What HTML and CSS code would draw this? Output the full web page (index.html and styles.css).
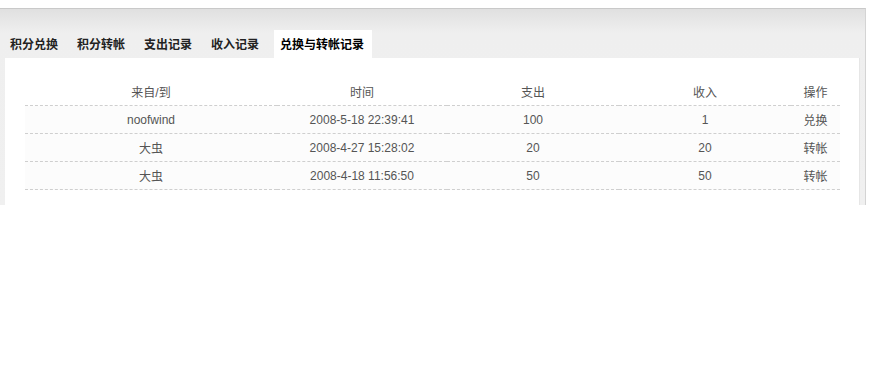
FILE: index.html
```html
<!DOCTYPE html>
<html>
<head>
    <meta charset="utf-8">
    <title>兑换与转帐记录</title>
    <link rel="stylesheet" href="styles.css">
</head>
<body>
    <div class="wrap">
        <ul class="tabs">
            <li>积分兑换</li>
            <li>积分转帐</li>
            <li>支出记录</li>
            <li>收入记录</li>
            <li class="current">兑换与转帐记录</li>
        </ul>

        <div class="panel">
            <table class="records">
                <colgroup>
                    <col class="c-from">
                    <col class="c-time">
                    <col class="c-out">
                    <col class="c-in">
                    <col class="c-op">
                </colgroup>
                <thead>
                    <tr>
                        <th>来自/到</th>
                        <th>时间</th>
                        <th>支出</th>
                        <th>收入</th>
                        <th>操作</th>
                    </tr>
                </thead>
                <tbody>
                    <tr>
                        <td>noofwind</td>
                        <td>2008-5-18 22:39:41</td>
                        <td>100</td>
                        <td>1</td>
                        <td>兑换</td>
                    </tr>
                    <tr>
                        <td>大虫</td>
                        <td>2008-4-27 15:28:02</td>
                        <td>20</td>
                        <td>20</td>
                        <td>转帐</td>
                    </tr>
                    <tr>
                        <td>大虫</td>
                        <td>2008-4-18 11:56:50</td>
                        <td>50</td>
                        <td>50</td>
                        <td>转帐</td>
                    </tr>
                </tbody>
            </table>
        </div>
    </div>
</body>
</html>
```

FILE: styles.css
```css
body { margin: 0; padding-top: 8px; background: #fff; font-family: "Liberation Sans", "Noto Sans CJK SC", sans-serif; font-size: 12px; color: #666; }

.wrap {
    width: 865px;
    height: 196px;
    border-top: 1px solid #c9c9c9;
    border-right: 1px solid #d4d4d4;
    background: linear-gradient(to bottom, #e0e0e0 0px, #efefef 24px, #f0f0f0 100%);
    overflow: hidden;
}

.tabs {
    list-style: none;
    margin: 0;
    padding: 21px 0 0 3px;
    display: flex;
    height: 28px;
}
.tabs li {
    padding: 0 7px;
    margin-right: 5px;
    height: 28px;
    line-height: 28px;
    font-family: "Noto Sans CJK SC", sans-serif;
    font-weight: bold;
    font-size: 12px;
    color: #222;
}
.tabs li.current {
    background: #fff;
    color: #000;
    margin-left: 3px;
    padding: 0 8px 0 6px;
}

.panel {
    margin: 0 5px;
    background: #fff;
    height: 147px;
    padding: 20px 20px 0 20px;
    border-right: 1px solid #e6e6e6;
}

.records {
    width: 815px;
    border-collapse: collapse;
    table-layout: fixed;
}
.c-from { width: 252px; }
.c-time { width: 170px; }
.c-out { width: 172px; }
.c-in { width: 172px; }
.c-op { width: 49px; }

.records th, .records td {
    height: 27px;
    padding: 0;
    text-align: center;
    font-weight: normal;
    color: #555;
    border-bottom: 1px dashed #cfcfcf;
}
.records tbody td { background: #fcfcfc; }
```
